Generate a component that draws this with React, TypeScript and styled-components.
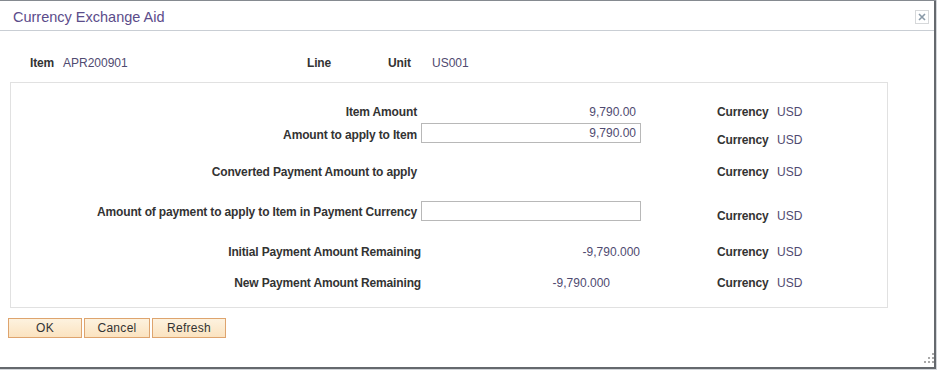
import React from "react";
import styled, { createGlobalStyle } from "styled-components";

const Global = createGlobalStyle`
  html, body { margin: 0; padding: 0; }
  body {
    background: #d3d6da;
    font-family: "Liberation Sans", Arial, sans-serif;
    font-size: 12px;
    color: #333;
    width: 937px;
    height: 370px;
    overflow: hidden;
  }
`;

const Modal = styled.div`
  position: relative;
  box-sizing: border-box;
  width: 936px;
  height: 368px;
  margin-top: 1px;
  background: #fff;
  border-right: 2px solid #65696e;
  border-bottom: 2px solid #65696e;
  box-shadow: 0 -1px 0 #858a90;
  display: flex;
  flex-direction: column;
`;

const Header = styled.div`
  height: 29px;
  flex: none;
  border-bottom: 1px solid #c9ced4;
  display: flex;
  align-items: center;
  justify-content: space-between;
  padding: 0 5px 0 13px;
`;

const Title = styled.div`
  font-size: 14.5px;
  line-height: 18px;
  padding-top: 2px;
  color: #5b4c8a;
`;

const CloseBtn = styled.button`
  box-sizing: border-box;
  width: 14px;
  height: 14px;
  margin-top: 2px;
  padding: 0;
  border: 1px solid #d6d8da;
  background: #fff;
  display: flex;
  align-items: center;
  justify-content: center;
`;

const Body = styled.div`
  padding-top: 25px;
  display: flex;
  flex-direction: column;
`;

const ItemRow = styled.div`
  display: grid;
  grid-template-columns: 277px 81px auto;
  padding-left: 30px;
  height: 14px;
`;

const Field = styled.div`
  display: flex;
  align-items: center;
  line-height: 14px;
`;

const Label = styled.span<{ $w?: number }>`
  font-weight: bold;
  letter-spacing: -0.15px;
  color: #333;
  white-space: nowrap;
  ${(p) => (p.$w ? `width: ${p.$w}px;` : "")}
`;

const Value = styled.span`
  color: #4f4a70;
  white-space: nowrap;
`;

const GroupBox = styled.div`
  margin: 12px 0 0 10px;
  width: 878px;
  box-sizing: border-box;
  border: 1px solid #e1e1e1;
  padding: 19px 0 14px 0;
  display: flex;
  flex-direction: column;
`;

const FormRow = styled.div<{ $gap: number }>`
  display: grid;
  grid-template-columns: 410px 220px 76px 60px auto;
  height: 20px;
  margin-top: ${(p) => p.$gap}px;
  line-height: 14px;
`;

const RowLabel = styled(Label)<{ $pad: number }>`
  align-self: center;
  text-align: right;
  padding-right: ${(p) => p.$pad}px;
`;

const Display = styled(Value)<{ $inset: number }>`
  align-self: center;
  text-align: right;
  padding-right: ${(p) => p.$inset}px;
`;

const Input = styled.input`
  box-sizing: border-box;
  width: 220px;
  height: 20px;
  margin: 0;
  border: 1px solid #b8b8b8;
  padding: 0 4px;
  font-family: "Liberation Sans", Arial, sans-serif;
  font-size: 12px;
  color: #4f4a70;
  text-align: right;
  background: #fff;
  outline: none;
`;

const CurLabel = styled(Label)<{ $drop: number }>`
  align-self: start;
  padding-top: ${(p) => p.$drop}px;
`;

const CurValue = styled(Value)<{ $drop: number }>`
  align-self: start;
  padding-top: ${(p) => p.$drop}px;
`;

const Buttons = styled.div`
  display: flex;
  gap: 2px;
  padding: 10px 0 0 8px;
`;

const Btn = styled.button<{ $w: number }>`
  box-sizing: border-box;
  width: ${(p) => p.$w}px;
  height: 20px;
  margin: 0;
  padding: 0;
  border: 1px solid #dea46e;
  background: linear-gradient(#fdf2df, #fbe3c0);
  font-family: "Liberation Sans", Arial, sans-serif;
  font-size: 12px;
  letter-spacing: 0.3px;
  color: #333;
  cursor: pointer;
`;

const Grip = styled.svg`
  position: absolute;
  right: 0;
  bottom: 2px;
`;

type Row = {
  label: string;
  gap: number;
  labelPad: number;
  kind: "text" | "input" | "empty";
  value?: string;
  inset?: number;
  drop: number;
};

const rows: Row[] = [
  { label: "Item Amount", gap: 0, labelPad: 4, kind: "text", value: "9,790.00", inset: 5, drop: 3 },
  { label: "Amount to apply to Item", gap: 1, labelPad: 4, kind: "input", value: "9,790.00", drop: 10 },
  { label: "Converted Payment Amount to apply", gap: 19, labelPad: 4, kind: "empty", drop: 3 },
  { label: "Amount of payment to apply to Item in Payment Currency", gap: 19, labelPad: 4, kind: "input", value: "", drop: 8 },
  { label: "Initial Payment Amount Remaining", gap: 21, labelPad: 0, kind: "text", value: "-9,790.000", inset: 1, drop: 3 },
  { label: "New Payment Amount Remaining", gap: 11, labelPad: 0, kind: "text", value: "-9,790.000", inset: 31, drop: 3 },
];

export default function App() {
  return (
    <>
      <Global />
      <Modal>
        <Header>
          <Title>Currency Exchange Aid</Title>
          <CloseBtn aria-label="Close">
            <svg width="8" height="8" viewBox="0 0 8 8">
              <path d="M1 1 L7 7 M7 1 L1 7" stroke="#8a9aa8" strokeWidth="1.6" />
            </svg>
          </CloseBtn>
        </Header>
        <Body>
          <ItemRow>
            <Field>
              <Label $w={33}>Item</Label>
              <Value>APR200901</Value>
            </Field>
            <Field>
              <Label>Line</Label>
            </Field>
            <Field>
              <Label $w={44}>Unit</Label>
              <Value>US001</Value>
            </Field>
          </ItemRow>
          <GroupBox>
            {rows.map((r) => (
              <FormRow key={r.label} $gap={r.gap}>
                <RowLabel $pad={r.labelPad}>{r.label}</RowLabel>
                {r.kind === "input" ? (
                  <Input defaultValue={r.value} />
                ) : r.kind === "text" ? (
                  <Display $inset={r.inset ?? 0}>{r.value}</Display>
                ) : (
                  <span />
                )}
                <span />
                <CurLabel $drop={r.drop}>Currency</CurLabel>
                <CurValue $drop={r.drop}>USD</CurValue>
              </FormRow>
            ))}
          </GroupBox>
          <Buttons>
            <Btn $w={74}>OK</Btn>
            <Btn $w={66}>Cancel</Btn>
            <Btn $w={74}>Refresh</Btn>
          </Buttons>
        </Body>
        <Grip width="12" height="12" viewBox="0 0 12 12">
          <g fill="#a9a9a9">
            <rect x="10" y="0" width="2" height="2" />
            <rect x="6" y="4" width="2" height="2" />
            <rect x="10" y="4" width="2" height="2" />
            <rect x="2" y="8" width="2" height="2" />
            <rect x="6" y="8" width="2" height="2" />
            <rect x="10" y="8" width="2" height="2" />
          </g>
        </Grip>
      </Modal>
    </>
  );
}
